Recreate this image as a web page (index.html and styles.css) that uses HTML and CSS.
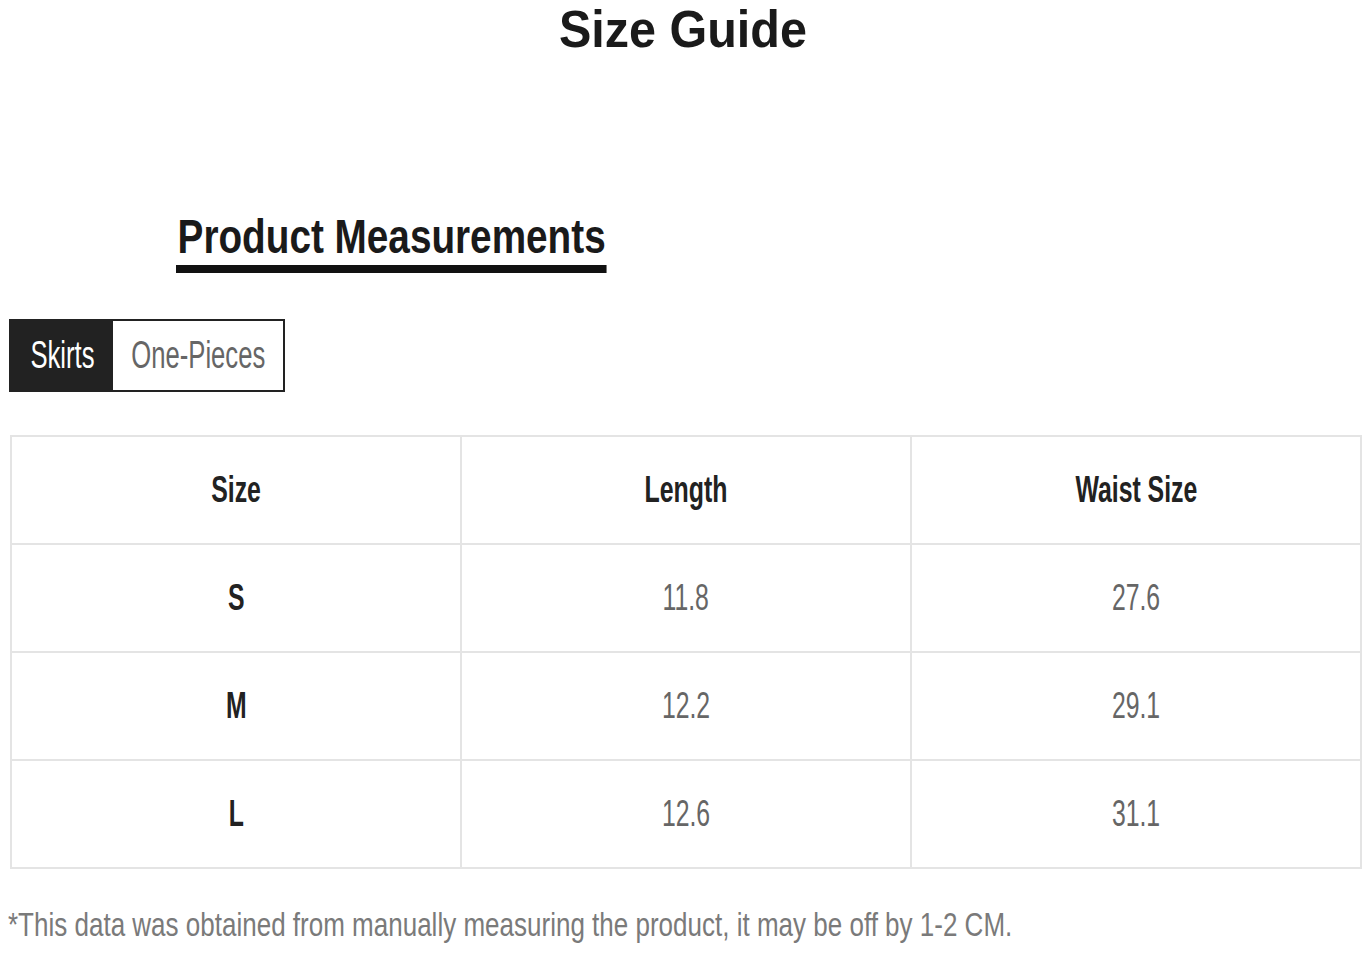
FILE: index.html
```html
<!DOCTYPE html>
<html>
<head>
<meta charset="utf-8">
<link rel="stylesheet" href="styles.css">
</head>
<body>
<div class="page">
  <h1 class="title"><span class="sq sq-title">Size Guide</span></h1>
  <div class="section-head">
    <h2 class="section-title">Product Measurements</h2>
  </div>
  <div class="tabs">
    <div class="tab active"><span class="sq sq-tab">Skirts</span></div>
    <div class="tab"><span class="sq sq-tab">One-Pieces</span></div>
  </div>
  <table class="sizes">
    <thead>
      <tr><th><span class="sq sq-th">Size</span></th><th><span class="sq sq-th">Length</span></th><th><span class="sq sq-th">Waist Size</span></th></tr>
    </thead>
    <tbody>
      <tr><td class="lbl"><span class="sq sq-td">S</span></td><td><span class="sq sq-td">11.8</span></td><td><span class="sq sq-td">27.6</span></td></tr>
      <tr><td class="lbl"><span class="sq sq-td">M</span></td><td><span class="sq sq-td">12.2</span></td><td><span class="sq sq-td">29.1</span></td></tr>
      <tr><td class="lbl"><span class="sq sq-td">L</span></td><td><span class="sq sq-td">12.6</span></td><td><span class="sq sq-td">31.1</span></td></tr>
    </tbody>
  </table>
  <p class="note"><span class="sq sq-note">*This data was obtained from manually measuring the product, it may be off by 1-2 CM.</span></p>
</div>
</body>
</html>
```
FILE: styles.css
```css
html, body { margin: 0; padding: 0; background: #fff; }
.page {
  width: 1365px;
  height: 954px;
  overflow: hidden;
  font-family: "Liberation Sans", Arial, sans-serif;
  color: #222;
}
.sq {
  display: inline-block;
  white-space: nowrap;
  transform-origin: center center;
}
.title {
  margin: 0;
  height: 50px;
  font-weight: bold;
  font-size: 52px;
  line-height: 59px;
  text-align: center;
  color: #1a1a1a;
}
.sq-title { transform: scaleX(0.933); }
.section-head {
  padding: 162px 0 0 176px;
  height: 61px;
}
.section-title {
  display: inline-block;
  margin: 0;
  font-size: 49px;
  line-height: 49px;
  font-weight: bold;
  color: #1a1a1a;
  white-space: nowrap;
  padding: 0 1px 4px 2px;
  border-bottom: 8px solid #111;
  transform: scaleX(0.79);
  transform-origin: left top;
}
.tabs {
  display: flex;
  margin: 46px 0 0 9px;
  width: 276px;
  height: 73px;
  border: 2px solid #222;
  box-sizing: border-box;
}
.tab {
  display: flex;
  align-items: center;
  justify-content: center;
  font-size: 38px;
  color: #666;
  overflow: visible;
}
.sq-tab { transform: scaleX(0.675); }
.tab.active {
  flex: 0 0 102px;
  background: #222;
  color: #fff;
}
.tab:not(.active) { flex: 1 1 0; min-width: 0; }
.sizes {
  margin: 43px 0 0 10px;
  width: 1352px;
  border-collapse: collapse;
  table-layout: fixed;
}
.sizes th, .sizes td {
  border: 2px solid #e4e4e4;
  height: 106px;
  padding: 0;
  text-align: center;
  font-weight: normal;
  color: #666;
}
.sizes th {
  color: #222;
  font-weight: bold;
  font-size: 36px;
}
.sizes td { font-size: 37px; }
.sq-th { transform: scaleX(0.69); }
.sq-td { transform: scaleX(0.67); }
.sizes td.lbl { color: #222; font-weight: bold; }
.note {
  margin: 38px 0 0 8px;
  font-size: 34px;
  line-height: 34px;
  color: #7a7a7a;
}
.sq-note {
  transform: scaleX(0.765);
  transform-origin: left center;
}
```
